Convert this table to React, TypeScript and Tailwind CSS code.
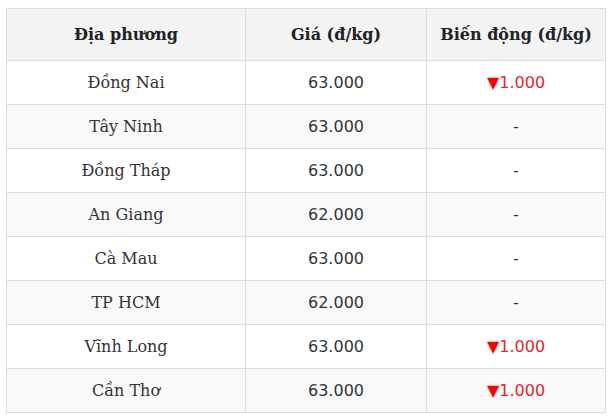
const rows: { place: string; price: string; change: string | null }[] = [
  { place: "Đồng Nai", price: "63.000", change: "1.000" },
  { place: "Tây Ninh", price: "63.000", change: null },
  { place: "Đồng Tháp", price: "63.000", change: null },
  { place: "An Giang", price: "62.000", change: null },
  { place: "Cà Mau", price: "63.000", change: null },
  { place: "TP HCM", price: "62.000", change: null },
  { place: "Vĩnh Long", price: "63.000", change: "1.000" },
  { place: "Cần Thơ", price: "63.000", change: "1.000" },
];

const serif = "font-['DejaVu_Serif',serif]";
const sans = "font-['DejaVu_Sans',sans-serif]";

export default function App() {
  return (
    <div className="w-[611px] h-[419px] bg-white pt-[8px] pl-[6px]">
      <table className="w-[599px] border-collapse table-fixed text-[16px]">
        <colgroup>
          <col className="w-[239px]" />
          <col className="w-[181px]" />
          <col className="w-[179px]" />
        </colgroup>
        <thead>
          <tr className="bg-[#f3f3f3] h-[52px]">
            <th className={`border border-[#dcdcdc] font-bold text-[#222] ${serif}`}>Địa phương</th>
            <th className={`border border-[#dcdcdc] font-bold text-[#222] ${serif}`}>Giá (đ/kg)</th>
            <th className={`border border-[#dcdcdc] font-bold text-[#222] ${serif}`}>Biến động (đ/kg)</th>
          </tr>
        </thead>
        <tbody>
          {rows.map((r, i) => (
            <tr key={r.place} className={`h-[44px] ${i % 2 === 1 ? "bg-[#f9f9f9]" : "bg-white"}`}>
              <td className={`border border-[#dcdcdc] text-center text-[#333] ${serif}`}>{r.place}</td>
              <td className={`border border-[#dcdcdc] text-center text-[#333] ${sans}`}>{r.price}</td>
              <td className={`border border-[#dcdcdc] text-center ${sans}`}>
                {r.change ? (
                  <span className="text-[#e3262b]">
                    <span className="text-[#f00]">▼</span>
                    {r.change}
                  </span>
                ) : (
                  <span className="text-[#333]">-</span>
                )}
              </td>
            </tr>
          ))}
        </tbody>
      </table>
    </div>
  );
}
